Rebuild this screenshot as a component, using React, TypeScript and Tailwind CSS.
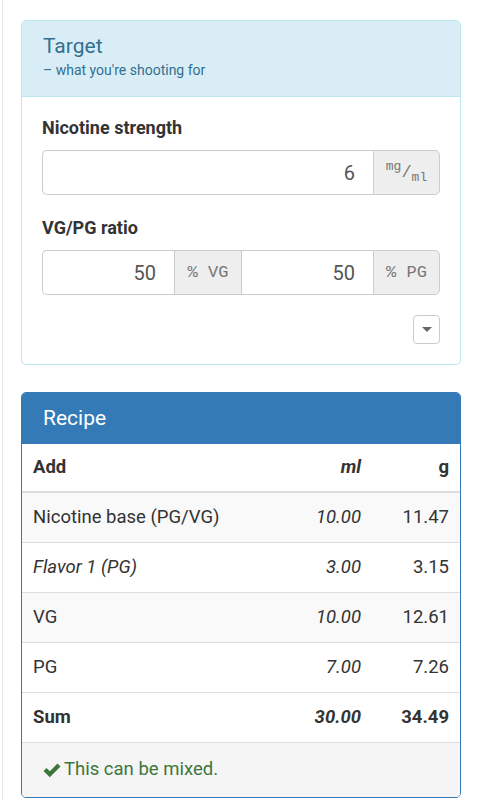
import React from "react";

type Row = { name: string; ml: string; g: string; italic?: boolean };

const rows: Row[] = [
  { name: "Nicotine base (PG/VG)", ml: "10.00", g: "11.47" },
  { name: "Flavor 1 (PG)", ml: "3.00", g: "3.15", italic: true },
  { name: "VG", ml: "10.00", g: "12.61" },
  { name: "PG", ml: "7.00", g: "7.26" },
];

function Addon({ children, last }: { children: React.ReactNode; last?: boolean }) {
  return (
    <div
      className={
        "flex w-[67px] shrink-0 items-center justify-center border border-[#ccc] bg-[#eee] text-[#777] font-['Liberation_Mono',monospace] text-[17px] " +
        (last ? "rounded-r-[5px]" : "border-r-0")
      }
    >
      {children}
    </div>
  );
}

function NumInput({ value, first }: { value: string; first?: boolean }) {
  return (
    <div
      className={
        "flex flex-1 items-center justify-end border border-r-0 border-[#ccc] bg-white pr-[18px] text-[20px] text-[#555] " +
        (first ? "rounded-l-[5px]" : "")
      }
    >
      {value}
    </div>
  );
}

export default function App() {
  return (
    <div className="min-h-[800px] bg-white font-['Roboto',sans-serif] text-[#333]">
      <div className="ml-[2px] min-h-[800px] border-l border-[#e8e8e8] pl-[18px] pr-[20px] pt-[20px]">
        {/* Target */}
        <div className="rounded-[5px] border border-[#bce8f1] bg-white">
          <div className="h-[76px] rounded-t-[4px] border-b border-[#bce8f1] bg-[#d9edf7] px-[21px] pt-[11px] text-[#31708f]">
            <div className="text-[21px] leading-[28px]">Target</div>
            <div className="text-[14px] leading-[20px]">– what you're shooting for</div>
          </div>
          <div className="px-[20px] pb-[20px] pt-[19px]">
            <div className="text-[18px] font-bold leading-[24px]">Nicotine strength</div>
            <div className="mt-[10px] flex h-[45px]">
              <NumInput value="6" first />
              <Addon last>
                <span className="flex items-center leading-none">
                  <span className="relative -top-[6px] text-[13px]">mg</span>
                  <span className="text-[17px]">/</span>
                  <span className="relative top-[5px] text-[13px]">ml</span>
                </span>
              </Addon>
            </div>
            <div className="mt-[21px] text-[18px] font-bold leading-[24px]">VG/PG ratio</div>
            <div className="mt-[10px] flex h-[45px]">
              <NumInput value="50" first />
              <Addon>%&nbsp;VG</Addon>
              <NumInput value="50" />
              <Addon last>%&nbsp;PG</Addon>
            </div>
            <div className="mt-[20px] flex justify-end">
              <div className="flex h-[29px] w-[27px] items-center justify-center rounded-[4px] border border-[#ccc] bg-white">
                <svg width="10" height="6" viewBox="0 0 10 6">
                  <path d="M0 0 L10 0 L5 5 Z" fill="#666" />
                </svg>
              </div>
            </div>
          </div>
        </div>

        {/* Recipe */}
        <div className="mt-[27px] overflow-hidden rounded-[5px] border border-[#337ab7] bg-white">
          <div className="flex h-[51px] items-center bg-[#337ab7] px-[21px] text-[21px] text-white">Recipe</div>
          <div className="text-[18.5px]">
            <div className="grid h-[49px] grid-cols-[1fr_100px_88px] items-center border-b-2 border-[#ddd] px-[11px] font-bold">
              <div>Add</div>
              <div className="text-right italic">ml</div>
              <div className="text-right">g</div>
            </div>
            {rows.map((r, i) => (
              <div
                key={r.name}
                className={
                  "grid h-[50px] grid-cols-[1fr_100px_88px] items-center border-b border-[#ddd] px-[11px] " +
                  (i % 2 === 0 ? "bg-[#f9f9f9]" : "bg-white")
                }
              >
                <div className={r.italic ? "italic" : ""}>{r.name}</div>
                <div className="text-right italic">{r.ml}</div>
                <div className="text-right">{r.g}</div>
              </div>
            ))}
            <div className="grid h-[49px] grid-cols-[1fr_100px_88px] items-center px-[11px] font-bold">
              <div>Sum</div>
              <div className="text-right italic">30.00</div>
              <div className="text-right">34.49</div>
            </div>
          </div>
          <div className="flex h-[55px] items-center gap-[3px] border-t border-[#ddd] bg-[#f5f5f5] px-[21px] text-[18.5px] text-[#3c763d]">
            <svg width="18" height="15" viewBox="0 0 18 15">
              <path d="M0.5 8 L3.5 5 L6.8 8.3 L14.5 0.5 L17.5 3.5 L6.8 14.2 Z" fill="#3c763d" />
            </svg>
            <span>This can be mixed.</span>
          </div>
        </div>
      </div>
    </div>
  );
}
